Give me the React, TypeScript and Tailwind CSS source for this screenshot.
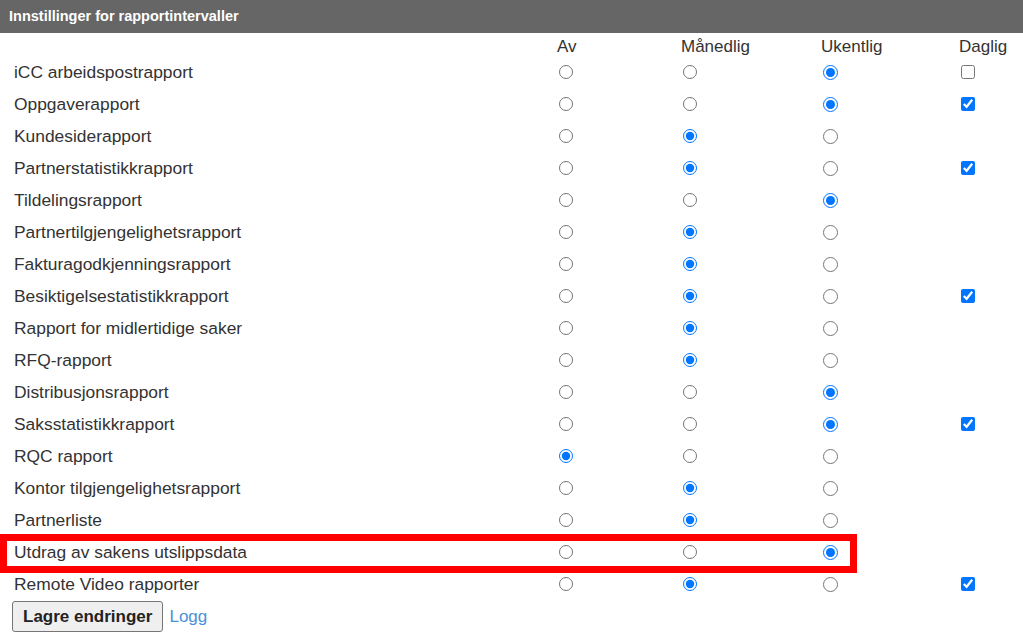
import React from 'react';

type Interval = 'av' | 'mnd' | 'uke';

interface ReportRow {
    name: string;
    interval: Interval;
    // undefined = no daily checkbox shown
    daily?: boolean;
}

const rows: ReportRow[] = [
    { name: 'iCC arbeidspostrapport', interval: 'uke', daily: false },
    { name: 'Oppgaverapport', interval: 'uke', daily: true },
    { name: 'Kundesiderapport', interval: 'mnd' },
    { name: 'Partnerstatistikkrapport', interval: 'mnd', daily: true },
    { name: 'Tildelingsrapport', interval: 'uke' },
    { name: 'Partnertilgjengelighetsrapport', interval: 'mnd' },
    { name: 'Fakturagodkjenningsrapport', interval: 'mnd' },
    { name: 'Besiktigelsestatistikkrapport', interval: 'mnd', daily: true },
    { name: 'Rapport for midlertidige saker', interval: 'mnd' },
    { name: 'RFQ-rapport', interval: 'mnd' },
    { name: 'Distribusjonsrapport', interval: 'uke' },
    { name: 'Saksstatistikkrapport', interval: 'uke', daily: true },
    { name: 'RQC rapport', interval: 'av' },
    { name: 'Kontor tilgjengelighetsrapport', interval: 'mnd' },
    { name: 'Partnerliste', interval: 'mnd' },
    { name: 'Utdrag av sakens utslippsdata', interval: 'uke' },
    { name: 'Remote Video rapporter', interval: 'mnd', daily: true },
];

const grid = 'grid grid-cols-[556px_124px_140px_138px_1fr]';

export default function App() {
    return (
        <div className="relative w-[1023px] h-[641px] bg-white text-[#333] font-['Liberation_Sans',Arial,sans-serif]">
            {/* Title bar */}
            <div className="h-[33px] bg-[#666] flex items-center pl-[9px]">
                <span className="text-[14.5px] font-bold text-white">Innstillinger for rapportintervaller</span>
            </div>

            {/* Column headings */}
            <div className={`${grid} h-[23px] pt-[4px] text-[17px] leading-[19px]`}>
                <div />
                <div className="pl-px">Av</div>
                <div className="pl-px">Månedlig</div>
                <div className="pl-px">Ukentlig</div>
                <div className="pl-px">Daglig</div>
            </div>

            {/* Report rows */}
            {rows.map((row, i) => (
                <div key={row.name} className={`${grid} h-[32px] items-center text-[17.4px] leading-[19px]`}>
                    <div className="pl-[14px]">{row.name}</div>
                    <div className="pl-[3px] flex items-center">
                        <input
                            type="radio"
                            name={`r${i}`}
                            defaultChecked={row.interval === 'av'}
                            className="w-[14px] h-[14px] accent-[#0075ff]"
                        />
                    </div>
                    <div className="pl-[3px] flex items-center">
                        <input
                            type="radio"
                            name={`r${i}`}
                            defaultChecked={row.interval === 'mnd'}
                            className="w-[14px] h-[14px] accent-[#0075ff]"
                        />
                    </div>
                    <div className="pl-[3px] flex items-center">
                        <input
                            type="radio"
                            name={`r${i}`}
                            defaultChecked={row.interval === 'uke'}
                            className="w-[15px] h-[15px] accent-[#0075ff]"
                        />
                    </div>
                    <div className="pl-[3px] flex items-center">
                        {row.daily !== undefined && (
                            <input
                                type="checkbox"
                                defaultChecked={row.daily}
                                className="w-[14px] h-[14px] accent-[#0075ff]"
                            />
                        )}
                    </div>
                </div>
            ))}

            {/* Actions */}
            <div className="flex items-center gap-[6px] pl-[12px] pt-px">
                <button className="h-[31px] px-[10px] text-[17px] font-bold text-[#222] bg-[#efefef] border border-[#767676] rounded-[3px]">
                    Lagre endringer
                </button>
                <a href="#" className="text-[17px] text-[#4a90d9]">Logg</a>
            </div>

            {/* Annotation highlight */}
            <div className="absolute left-0 top-[534px] w-[857px] h-[39px] border-[7px] border-[#ff0000] pointer-events-none" />
        </div>
    );
}
